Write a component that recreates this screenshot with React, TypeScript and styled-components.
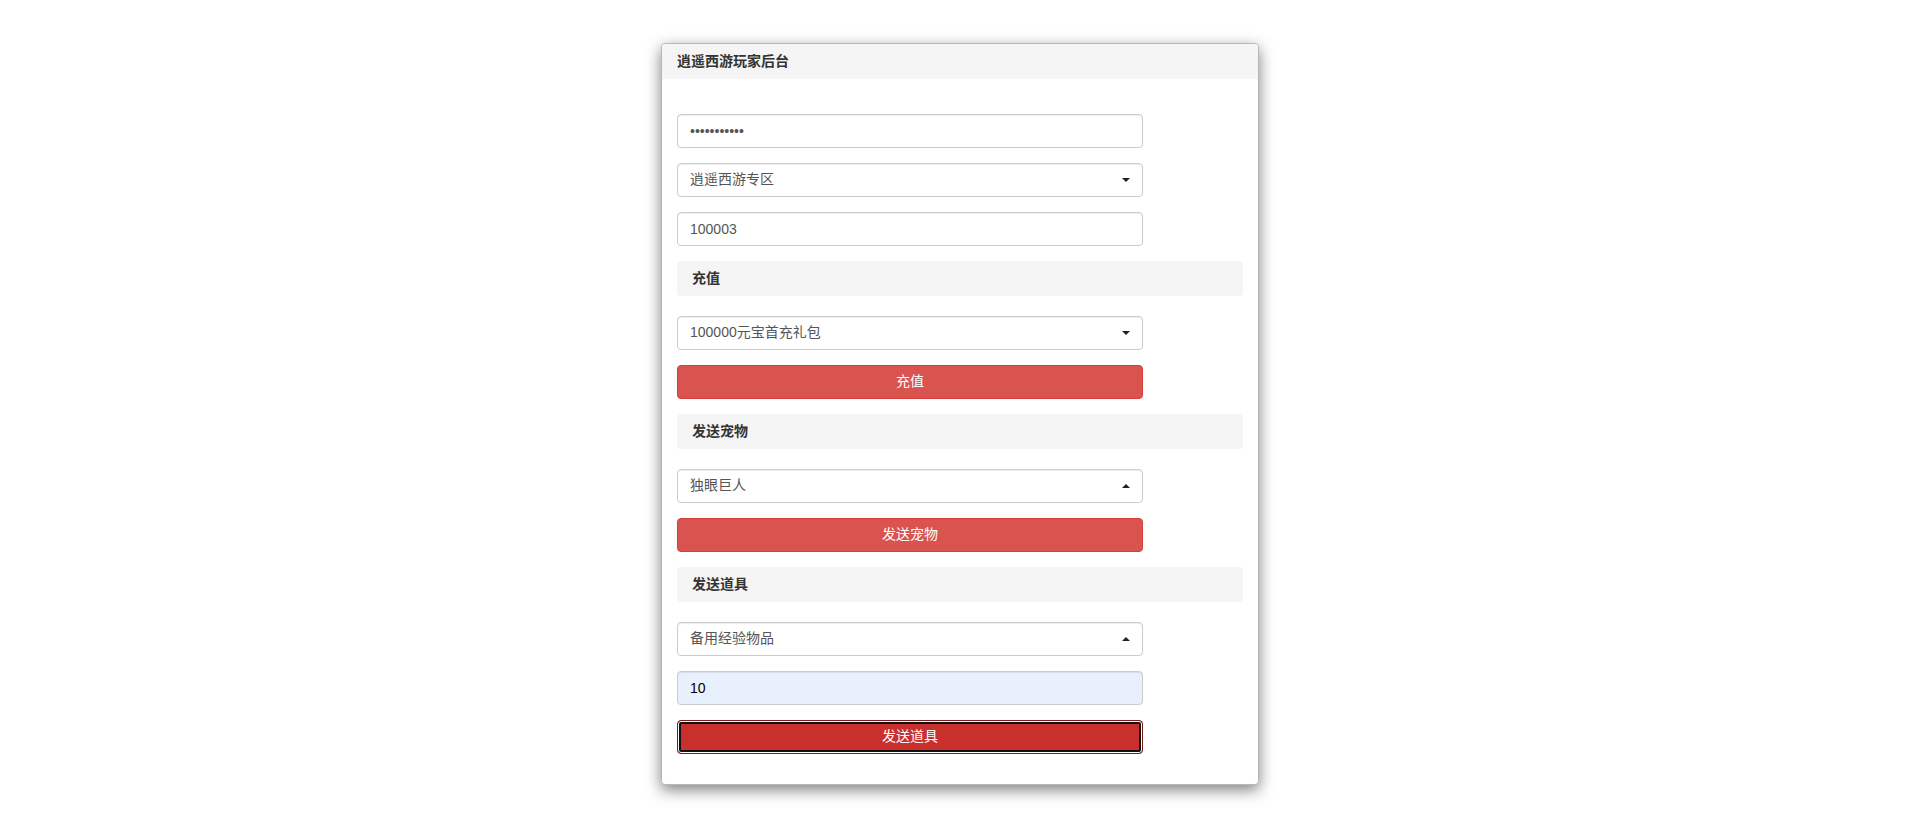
import React from 'react';
import styled, { createGlobalStyle } from 'styled-components';

const GlobalStyle = createGlobalStyle`
  html, body {
    margin: 0;
    padding: 0;
    background: #fff;
  }
  body {
    font-family: "Liberation Sans", Arial, "Noto Sans CJK SC", sans-serif;
    font-size: 14px;
    line-height: 1.42857;
    color: #333;
  }
  * {
    box-sizing: border-box;
  }
`;

const Page = styled.div`
  display: flex;
  justify-content: center;
  padding-top: 43px;
  padding-bottom: 30px;
`;

const Panel = styled.div`
  width: 598px;
  background: #fff;
  border: 1px solid #b8b8b8;
  border-radius: 4px;
  box-shadow: 0 5px 15px rgba(0, 0, 0, 0.5);
`;

const PanelHeading = styled.div`
  height: 35px;
  display: flex;
  align-items: center;
  padding: 0 15px;
  background: #f5f5f5;
  border-radius: 3px 3px 0 0;
  font-weight: bold;
  font-size: 14px;
  color: #333;
`;

const PanelBody = styled.div`
  display: flex;
  flex-direction: column;
  gap: 15px;
  padding: 35px 15px 30px;
`;

const Field = styled.input<{ $autofill?: boolean }>`
  display: block;
  width: 466px;
  height: 34px;
  padding: 6px 12px;
  font-family: inherit;
  font-size: 14px;
  line-height: 1.42857;
  color: ${(p) => (p.$autofill ? '#000' : '#555')};
  background: ${(p) => (p.$autofill ? '#e8f0fe' : '#fff')};
  border: 1px solid #ccc;
  border-radius: 4px;
  box-shadow: inset 0 1px 1px rgba(0, 0, 0, 0.075);
  outline: none;
  margin: 0;
`;

const SelectBox = styled.div`
  display: flex;
  align-items: center;
  justify-content: space-between;
  width: 466px;
  height: 34px;
  padding: 6px 12px;
  font-size: 14px;
  color: #555;
  background: #fff;
  border: 1px solid #ccc;
  border-radius: 4px;
  box-shadow: inset 0 1px 1px rgba(0, 0, 0, 0.075);
`;

const Caret = styled.span<{ $up?: boolean }>`
  width: 0;
  height: 0;
  border-left: 4px solid transparent;
  border-right: 4px solid transparent;
  ${(p) => (p.$up ? 'border-bottom: 4px solid #222;' : 'border-top: 4px solid #222;')}
`;

const SectionTitle = styled.div`
  height: 35px;
  display: flex;
  align-items: center;
  padding: 0 15px;
  margin-bottom: 5px;
  background: #f5f5f5;
  border-radius: 4px;
  font-weight: bold;
  font-size: 14px;
  color: #333;
`;

const DangerButton = styled.button<{ $focused?: boolean }>`
  display: block;
  width: 466px;
  height: 34px;
  padding: 6px 12px;
  margin: 0;
  font-family: inherit;
  font-size: 14px;
  line-height: 1.42857;
  color: #fff;
  text-align: center;
  cursor: pointer;
  border-radius: 4px;
  outline: none;
  background: ${(p) => (p.$focused ? '#c9302c' : '#d9534f')};
  border: 1px solid ${(p) => (p.$focused ? '#761c19' : '#d43f3a')};
  box-shadow: ${(p) => (p.$focused ? 'inset 0 0 0 1px #fff, inset 0 0 0 3px #111' : 'none')};
`;

function Select({ value, open }: { value: string; open?: boolean }) {
  return (
    <SelectBox>
      <span>{value}</span>
      <Caret $up={open} />
    </SelectBox>
  );
}

export default function App() {
  return (
    <>
      <GlobalStyle />
      <Page>
        <Panel>
          <PanelHeading>逍遥西游玩家后台</PanelHeading>
          <PanelBody>
            <Field type="password" defaultValue="12345678901" readOnly />
            <Select value="逍遥西游专区" />
            <Field type="text" defaultValue="100003" readOnly />

            <SectionTitle>充值</SectionTitle>
            <Select value="100000元宝首充礼包" />
            <DangerButton>充值</DangerButton>

            <SectionTitle>发送宠物</SectionTitle>
            <Select value="独眼巨人" open />
            <DangerButton>发送宠物</DangerButton>

            <SectionTitle>发送道具</SectionTitle>
            <Select value="备用经验物品" open />
            <Field type="text" defaultValue="10" $autofill readOnly />
            <DangerButton $focused>发送道具</DangerButton>
          </PanelBody>
        </Panel>
      </Page>
    </>
  );
}
